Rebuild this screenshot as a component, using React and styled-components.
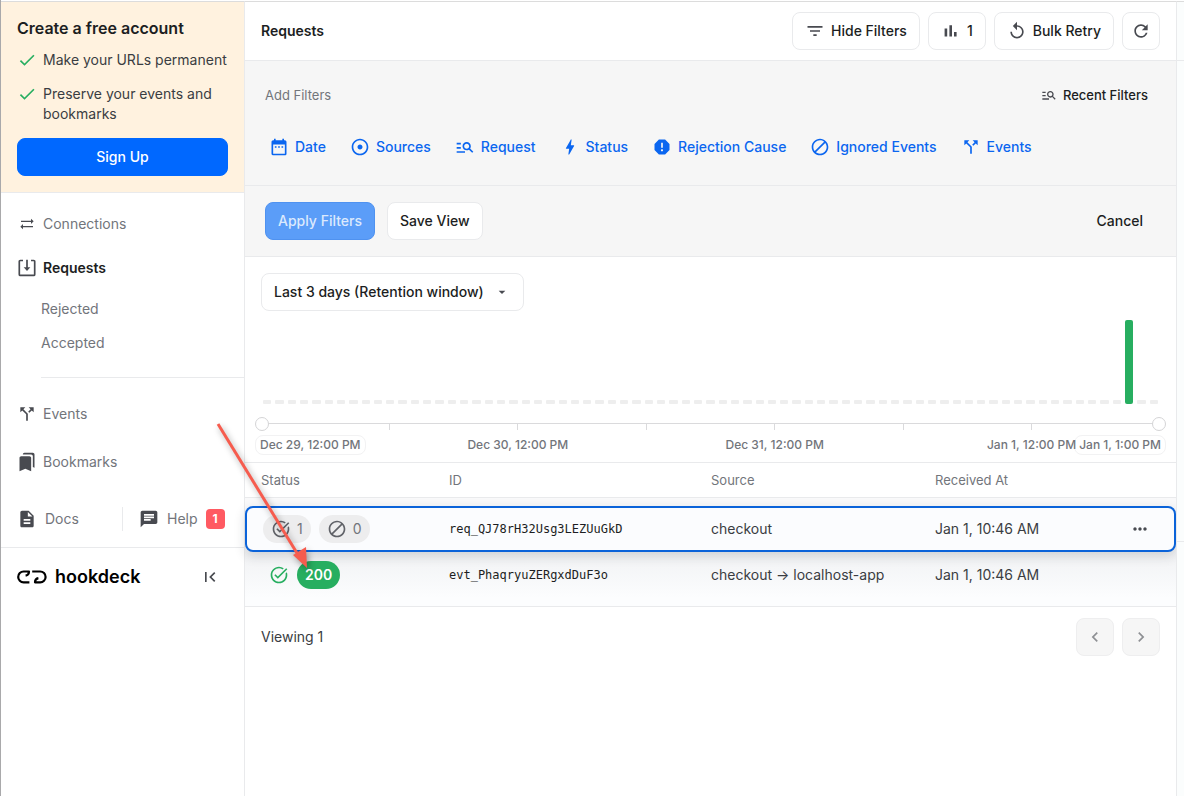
import React from "react";
import styled, { createGlobalStyle, css } from "styled-components";
import {
  MdAdjust,
  MdArrowDropDown,
  MdBolt,
  MdBookmarks,
  MdCallSplit,
  MdChat,
  MdCheck,
  MdChevronLeft,
  MdChevronRight,
  MdDateRange,
  MdDescription,
  MdDoNotDisturbAlt,
  MdFilterList,
  MdFirstPage,
  MdManageSearch,
  MdMoreHoriz,
  MdRefresh,
  MdReplay,
  MdReport,
  MdSyncAlt,
  MdTaskAlt,
} from "react-icons/md";

const c = {
  text: "#1c1e22",
  body: "#3a3d42",
  muted: "#72757b",
  icon: "#484a50",
  line: "#e9eaec",
  blue: "#0068ff",
  link: "#0b66f0",
  green: "#27ae60",
  panel: "#f6f6f6",
};

const GlobalStyle = createGlobalStyle`
  *, *::before, *::after { box-sizing: border-box; }
  body { margin: 0; background: #fff; }
  body, button, input, select {
    font-family: Inter, "Liberation Sans", sans-serif;
    font-size: 14px;
    line-height: 20px;
    color: ${c.text};
  }
  button { cursor: pointer; }
  svg { flex: none; display: block; }
`;

const Shell = styled.div`
  display: flex;
  min-height: 100vh;
  position: relative;
  border-left: 1px solid #a9a9ab;
  padding-top: 1px;
`;

/* ---------- sidebar ---------- */

const Sidebar = styled.aside`
  flex: none;
  width: 244px;
  border-top: 1px solid #dcdcdc;
  border-right: 1px solid ${c.line};
`;

const Promo = styled.section`
  display: flex;
  flex-direction: column;
  padding: 14px 16px 16px;
  background: #fff2df;
  border-bottom: 1px solid ${c.line};
`;

const PromoTitle = styled.h2`
  margin: 0 0 10px;
  font-size: 16px;
  line-height: 24px;
  font-weight: 600;
`;

const PromoList = styled.ul`
  list-style: none;
  margin: 0 0 14px;
  padding: 0;
  display: grid;
  gap: 14px;
`;

const PromoItem = styled.li`
  display: flex;
  gap: 6px;
  color: ${c.body};
  margin-right: -8px;
  svg { color: ${c.green}; }
`;

const Nav = styled.nav`
  padding-top: 9px;
`;

const NavLink = styled.a`
  display: flex;
  align-items: center;
  gap: 8px;
  height: ${(p) => p.$h || 44}px;
  padding-left: 16px;
  text-decoration: none;
  color: ${(p) => (p.$active ? c.text : c.muted)};
  font-weight: ${(p) => (p.$active ? 600 : 400)};
  svg { color: ${c.icon}; }
`;

const IconBox = styled.span`
  display: flex;
  align-items: center;
  justify-content: center;
  width: 20px;
  height: 20px;
  margin-right: -2px;
`;

const SubNav = styled.div`
  margin: 2px 0 12px 40px;
  padding-bottom: 17px;
  border-bottom: 1px solid ${c.line};
`;

const SubLink = styled.a`
  display: flex;
  align-items: center;
  height: 34px;
  color: ${c.muted};
  text-decoration: none;
`;

const HelpRow = styled.div`
  display: flex;
  align-items: center;
  height: 62px;
  padding-top: 4px;
  border-bottom: 1px solid ${c.line};
`;

const HelpLink = styled.a`
  display: flex;
  align-items: center;
  gap: 8px;
  flex: 1;
  height: 24px;
  padding-left: 16px;
  color: ${c.muted};
  text-decoration: none;
  svg { color: ${c.icon}; }
  & + & { border-left: 1px solid ${c.line}; }
`;

const Badge = styled.span`
  width: 19px;
  height: 20px;
  border-radius: 4px;
  background: #ff5a62;
  color: #fff;
  font-size: 12px;
  font-weight: 700;
  text-align: center;
`;

const Brand = styled.div`
  display: flex;
  align-items: center;
  justify-content: space-between;
  height: 58px;
  padding: 0 24px 0 16px;
`;

const BrandLink = styled.a`
  display: flex;
  align-items: center;
  gap: 8px;
  color: #000;
  font-size: 18px;
  font-weight: 600;
  text-decoration: none;
`;

const IconButton = styled.button`
  display: flex;
  padding: 0;
  border: 0;
  background: none;
  color: ${c.icon};
`;

/* ---------- main column ---------- */

const Main = styled.main`
  flex: 1;
  min-width: 0;
  border-top: 1px solid #dcdcdc;
`;

const Rail = styled.div`
  flex: none;
  width: 8px;
  border-top: 1px solid #dcdcdc;
  border-left: 1px solid ${c.line};
  background: #fbfdfd;
`;

const RailBlock = styled.div`
  height: ${(p) => p.$h}px;
  border-bottom: 1px solid ${c.line};
`;

const TopBar = styled.header`
  display: flex;
  align-items: center;
  justify-content: space-between;
  height: 59px;
  padding: 0 16px;
  border-bottom: 1px solid ${c.line};
`;

const PageTitle = styled.h1`
  margin: 0;
  font-size: 14px;
  font-weight: 600;
`;

const Group = styled.div`
  display: flex;
  align-items: center;
  gap: ${(p) => p.$gap || 8}px;
`;

const Button = styled.button`
  display: flex;
  align-items: center;
  justify-content: center;
  gap: 6px;
  height: 38px;
  padding: 0 12px;
  border: 1px solid ${c.line};
  border-radius: 8px;
  background: #fff;
  font-weight: 500;
  white-space: nowrap;
  svg { color: ${c.icon}; }
  ${(p) => p.$primary && css`
    background: ${c.blue};
    border-color: ${c.blue};
    color: #fff;
  `}
  ${(p) => p.$square && css`
    width: 38px;
    padding: 0;
  `}
  ${(p) => p.$ghost && css`
    background: none;
    border-color: transparent;
  `}
  &:disabled {
    cursor: default;
    background: ${(p) => (p.$primary ? "#5b9df8" : "#f6f6f6")};
    border-color: ${(p) => (p.$primary ? "#4f92f0" : "#eeeeef")};
    color: ${(p) => (p.$primary ? "#dbe9fd" : c.muted)};
    svg { color: #8e9094; }
  }
`;

const FilterPanel = styled.section`
  background: ${c.panel};
  padding: 0 20px;
  height: 125px;
  border-bottom: 1px solid ${c.line};
`;

const FilterHead = styled.div`
  display: flex;
  justify-content: space-between;
  align-items: center;
  padding-top: 24px;
  font-size: 13px;
`;

const FilterCaption = styled.span`
  color: ${c.muted};
`;

const RecentButton = styled.button`
  display: flex;
  align-items: center;
  gap: 6px;
  padding: 0 8px;
  border: 0;
  background: none;
  font-size: 13px;
  font-weight: 500;
  svg { color: ${c.icon}; }
`;

const FilterList = styled.div`
  display: flex;
  gap: 16px;
  padding-top: 32px;
`;

const FilterButton = styled.button`
  display: flex;
  align-items: center;
  gap: 6px;
  padding: 0 4px;
  border: 0;
  background: none;
  color: ${c.link};
  font-weight: 500;
  white-space: nowrap;
`;

const ApplyBar = styled.div`
  display: flex;
  align-items: center;
  justify-content: space-between;
  height: 71px;
  padding: 0 20px;
  background: ${c.panel};
  border-bottom: 1px solid ${c.line};
`;

/* ---------- time chart ---------- */

const Chart = styled.section`
  padding: 16px 16px 7px;
  border-bottom: 1px solid ${c.line};
`;

const SelectWrap = styled.label`
  display: inline-flex;
  position: relative;
  svg {
    position: absolute;
    right: 14px;
    top: 11px;
    color: ${c.icon};
    pointer-events: none;
  }
`;

const Select = styled.select`
  appearance: none;
  height: 38px;
  padding: 0 39px 0 12px;
  border: 1px solid ${c.line};
  border-radius: 8px;
  background: #fff;
  font-weight: 500;
`;

const Bars = styled.div`
  display: flex;
  align-items: flex-end;
  height: 84px;
  margin-top: 9px;
`;

const Bar = styled.div`
  flex: 1;
  margin: 0 2px;
  border-radius: ${(p) => (p.$filled ? 2 : 1)}px;
  height: 4px;
  background: ${(p) => (p.$filled ? c.green : "#eeeeee")};
`;

const Track = styled.div`
  display: flex;
  position: relative;
  height: 7px;
  margin-top: 19px;
  border-top: 1px solid #dadadc;
`;

const Segment = styled.span`
  flex: 1;
  border-right: 1px solid #dadadc;
  &:last-of-type { border-right: 0; }
`;

const Range = styled.input`
  appearance: none;
  position: absolute;
  left: -6px;
  top: -7px;
  width: calc(100% + 12px);
  height: 14px;
  margin: 0;
  background: none;
  pointer-events: none;
  &::-webkit-slider-thumb {
    appearance: none;
    width: 14px;
    height: 14px;
    border: 1px solid #d4d4d6;
    border-radius: 50%;
    background: #fff;
    pointer-events: auto;
  }
`;

const Scale = styled.div`
  display: grid;
  grid-template-columns: repeat(7, 1fr);
  margin: 5px -6px 0;
  padding: 0 6px;
`;

const Tick = styled.span`
  grid-row: 1;
  grid-column: ${(p) => p.$from} / span 2;
  justify-self: center;
  font-size: 12px;
  font-weight: 500;
  color: ${c.muted};
`;

const Edge = styled(Tick)`
  grid-column: ${(p) => (p.$end ? 7 : 1)};
  justify-self: ${(p) => (p.$end ? "end" : "start")};
  margin: 0 -6px;
  padding: 0 4px;
  border: 1px solid #f2f2f3;
  border-radius: 8px;
  line-height: 18px;
  white-space: nowrap;
`;

/* ---------- table ---------- */

const Table = styled.table`
  display: block;
  border-bottom: 1px solid ${c.line};
`;

const Head = styled.thead`
  display: block;
`;

const Body = styled.tbody`
  display: block;
  padding: 8px 0;
  background: linear-gradient(#f9f9fa 0, #f9f9fa 20px, #f1f2f4 54px, #fcfdfe 100px);
`;

const Row = styled.tr`
  display: grid;
  grid-template-columns: 188fr 262fr 224fr 225fr;
  align-items: center;
  height: 46px;
  padding: 0 16px;
  ${(p) => p.$header && css`
    height: 35px;
    border-bottom: 1px solid ${c.line};
  `}
  ${(p) => p.$selected && css`
    padding: 0 14px;
    border: 2px solid #0b63d9;
    border-radius: 8px;
    background: #fbfcfe;
    box-shadow: 0 4px 12px rgba(30, 35, 45, 0.16);
  `}
`;

const Th = styled.th`
  padding: 0;
  text-align: left;
  font-size: 13px;
  font-weight: 400;
  color: ${c.muted};
`;

const Td = styled.td`
  display: flex;
  align-items: center;
  justify-content: space-between;
  padding: 0;
  color: ${c.body};
`;

const Mono = styled.code`
  font-family: "DejaVu Sans Mono", monospace;
  font-size: 12px;
  color: ${c.text};
`;

const Statuses = styled.div`
  display: flex;
  align-items: center;
  gap: 8px;
  padding-left: ${(p) => p.$inset}px;
`;

const Pill = styled.span`
  display: flex;
  align-items: center;
  gap: 6px;
  height: 28px;
  padding: 0 8px;
  border-radius: 14px;
  background: #ededee;
  color: ${c.muted};
  svg { color: #606268; }
  ${(p) => p.$success && css`
    background: ${c.green};
    color: #fff;
    font-weight: 600;
  `}
`;

const MoreButton = styled(IconButton)`
  margin-right: 10px;
`;

const TableFooter = styled.footer`
  display: flex;
  align-items: center;
  justify-content: space-between;
  padding: 11px 16px;
  color: ${c.body};
`;

const Annotation = styled.svg`
  position: absolute;
  left: 209px;
  top: 416px;
  pointer-events: none;
  filter: drop-shadow(2px 3px 3px rgba(0, 0, 0, 0.35));
`;

const StatsIcon = () => (
  <svg width="20" height="20" viewBox="0 0 20 20" fill="currentColor">
    <path d="M3.6 7.600H6.200V15.400H3.600ZM8.400 4.200H11V15.400H8.400ZM13 11H15.600V15.400H13Z" />
  </svg>
);

const InboxIcon = () => (
  <svg width="20" height="20" viewBox="0 0 20 20" fill="none" stroke="currentColor">
    <path d="M6 2.5H3.3Q2.3 2.5 2.3 3.5V16.4Q2.3 17.4 3.3 17.4H16.7Q17.7 17.4 17.7 16.4V3.5Q17.7 2.5 16.7 2.5H14" strokeWidth="1.7" />
    <path d="M10 1.8V10" strokeWidth="1.7" />
    <path d="M6.7 9.3H13.3L10 13Z" fill="currentColor" stroke="none" />
  </svg>
);

const Logo = () => (
  <svg width="30" height="14" viewBox="0 0 30 14" fill="none" stroke="#000" strokeWidth="2.2">
    <path d="M8.600 5.600C10.800 5.200 12 4 12 1.500H6.600A5.400 5.400 0 0 0 6.600 12.300H12.400" strokeLinejoin="round" />
    <path d="M15.200 1.500H23.200A5.400 5.400 0 0 1 23.200 12.300H18C18 9.800 19.200 8.600 21.400 8.200" strokeLinejoin="round" />
  </svg>
);

const filters = [
  ["Date", MdDateRange],
  ["Sources", MdAdjust],
  ["Request", MdManageSearch],
  ["Status", MdBolt],
  ["Rejection Cause", MdReport],
  ["Ignored Events", MdDoNotDisturbAlt],
  ["Events", MdCallSplit],
];

const hours = Array.from({ length: 73 }, (_, i) => (i === 70 ? 1 : 0));

export default function App() {
  return (
    <Shell>
      <GlobalStyle />
      <Sidebar>
        <Promo>
          <PromoTitle>Create a free account</PromoTitle>
          <PromoList>
            <PromoItem><MdCheck size={20} />Make your URLs permanent</PromoItem>
            <PromoItem><MdCheck size={20} />Preserve your events and bookmarks</PromoItem>
          </PromoList>
          <Button $primary>Sign Up</Button>
        </Promo>
        <Nav>
          <NavLink href="#connections"><IconBox><MdSyncAlt size={16} /></IconBox>Connections</NavLink>
          <NavLink href="#requests" $active><IconBox><InboxIcon /></IconBox>Requests</NavLink>
          <SubNav>
            <SubLink href="#rejected">Rejected</SubLink>
            <SubLink href="#accepted">Accepted</SubLink>
          </SubNav>
          <NavLink href="#events" $h={48}><IconBox><MdCallSplit size={20} /></IconBox>Events</NavLink>
          <NavLink href="#bookmarks" $h={48}><IconBox><MdBookmarks size={20} /></IconBox>Bookmarks</NavLink>
        </Nav>
        <HelpRow>
          <HelpLink href="#docs"><MdDescription size={20} />Docs</HelpLink>
          <HelpLink href="#help"><MdChat size={20} />Help<Badge>1</Badge></HelpLink>
        </HelpRow>
        <Brand>
          <BrandLink href="#home"><Logo />hookdeck</BrandLink>
          <IconButton aria-label="Collapse sidebar"><MdFirstPage size={20} /></IconButton>
        </Brand>
      </Sidebar>

      <Main>
        <TopBar>
          <PageTitle>Requests</PageTitle>
          <Group>
            <Button><MdFilterList size={20} />Hide Filters</Button>
            <Button><StatsIcon />1</Button>
            <Button><MdReplay size={20} />Bulk Retry</Button>
            <Button $square aria-label="Refresh"><MdRefresh size={20} /></Button>
          </Group>
        </TopBar>

        <FilterPanel>
          <FilterHead>
            <FilterCaption>Add Filters</FilterCaption>
            <RecentButton><MdManageSearch size={16} />Recent Filters</RecentButton>
          </FilterHead>
          <FilterList>
            {filters.map(([label, Icon]) => (
              <FilterButton key={label}><Icon size={20} />{label}</FilterButton>
            ))}
          </FilterList>
        </FilterPanel>

        <ApplyBar>
          <Group $gap={12}>
            <Button $primary disabled>Apply Filters</Button>
            <Button>Save View</Button>
          </Group>
          <Button $ghost>Cancel</Button>
        </ApplyBar>

        <Chart>
          <SelectWrap>
            <Select aria-label="Time range" defaultValue="3d">
              <option value="3d">Last 3 days (Retention window)</option>
            </Select>
            <MdArrowDropDown size={16} />
          </SelectWrap>
          <Bars>
            {hours.map((v, i) => (
              <Bar key={i} $filled={v > 0} style={v > 0 ? { height: `${v * 100}%` } : undefined} />
            ))}
          </Bars>
          <Track>
            {Array.from({ length: 7 }, (_, i) => <Segment key={i} />)}
            <Range type="range" aria-label="Range start" min="0" max="73" defaultValue="0" />
            <Range type="range" aria-label="Range end" min="0" max="73" defaultValue="73" />
          </Track>
          <Scale>
            <Edge>Dec 29, 12:00 PM</Edge>
            <Edge $end>Jan 1, 1:00 PM</Edge>
            <Tick $from={2}>Dec 30, 12:00 PM</Tick>
            <Tick $from={4}>Dec 31, 12:00 PM</Tick>
            <Tick $from={6}>Jan 1, 12:00 PM</Tick>
          </Scale>
        </Chart>

        <Table>
          <Head>
            <Row $header>
              <Th>Status</Th>
              <Th>ID</Th>
              <Th>Source</Th>
              <Th>Received At</Th>
            </Row>
          </Head>
          <Body>
            <Row $selected>
              <Td>
                <Statuses $inset={2}>
                  <Pill><MdTaskAlt size={20} />1</Pill>
                  <Pill><MdDoNotDisturbAlt size={20} />0</Pill>
                </Statuses>
              </Td>
              <Td><Mono>req_QJ78rH32Usg3LEZUuGkD</Mono></Td>
              <Td>checkout</Td>
              <Td>
                Jan 1, 10:46 AM
                <MoreButton aria-label="More actions"><MdMoreHoriz size={20} /></MoreButton>
              </Td>
            </Row>
            <Row>
              <Td>
                <Statuses $inset={8}>
                  <MdTaskAlt size={20} color={c.green} />
                  <Pill $success>200</Pill>
                </Statuses>
              </Td>
              <Td><Mono>evt_PhaqryuZERgxdDuF3o</Mono></Td>
              <Td>checkout → localhost-app</Td>
              <Td>Jan 1, 10:46 AM</Td>
            </Row>
          </Body>
        </Table>

        <TableFooter>
          Viewing 1
          <Group>
            <Button $square disabled aria-label="Previous page"><MdChevronLeft size={20} /></Button>
            <Button $square disabled aria-label="Next page"><MdChevronRight size={20} /></Button>
          </Group>
        </TableFooter>
      </Main>

      <Rail>
        <RailBlock $h={59} />
        <RailBlock $h={481} />
      </Rail>

      <Annotation width="110" height="164" viewBox="0 0 110 164">
        <path d="M8 8L90 142" stroke="#f65c4e" strokeWidth="3" />
        <path d="M97 152L83 139L96 131Z" fill="#f65c4e" />
      </Annotation>
    </Shell>
  );
}
